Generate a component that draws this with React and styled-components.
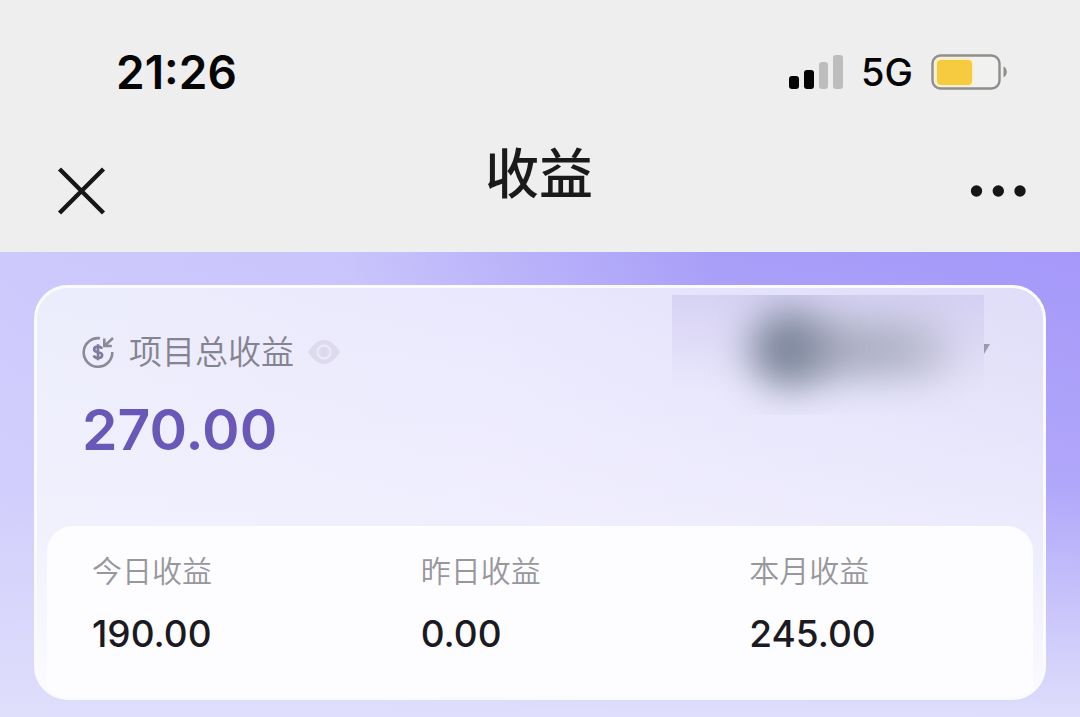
import { useState } from "react"
import styled, { createGlobalStyle } from "styled-components"

const GlobalStyle = createGlobalStyle`
* {
  box-sizing: border-box;
}
body {
  margin: 0;
  font-family: Inter, "Noto Sans CJK SC", sans-serif;
  color: #1b1a22;
}
`

const Page = styled.div`
min-height: 100vh;
display: flex;
flex-direction: column;
background-color: #eeeeee;
`
const StatusBar = styled.div`
display: flex;
align-items: center;
justify-content: space-between;
padding: 42px 72px 0 116px;
`
const Time = styled.time`
font-size: 46px;
font-weight: 600;
line-height: 60px;
color: #050505;
`
const StatusIcons = styled.div`
display: flex;
align-items: center;
gap: 18px;
`
const Network = styled.span`
font-size: 38px;
font-weight: 500;
line-height: 60px;
color: #050505;
`
const NavBar = styled.header`
display: flex;
align-items: center;
justify-content: space-between;
padding: 43px 52px 15px 56px;
`
const Title = styled.h1`
margin: 0;
padding-bottom: 32px;
font-size: 54px;
font-weight: 500;
line-height: 60px;
color: #1a1a1a;
`
const IconButton = styled.button`
display: flex;
align-items: center;
padding: 0;
border: none;
background: none;
color: ${(props) => props.color || "#161616"};
cursor: pointer;
`
const Content = styled.main`
flex: 1;
padding: 33px 34px 17px;
background:
  linear-gradient(to bottom, rgba(224, 224, 253, 0) 0%, rgba(224, 224, 253, 0.2) 50%, #dfdefb 100%),
  linear-gradient(to right, #cec9fc 0%, #c9c4fb 32%, #a89ef8 66%, #a598f9 100%);
`
const Card = styled.section`
border: 3px solid #fbfbff;
border-radius: 34px;
overflow: hidden;
background:
  linear-gradient(to bottom, rgba(244, 243, 255, 0) 0%, rgba(244, 243, 255, 0.6) 58%, #fbfbff 100%),
  linear-gradient(to right, #ecedfc 0%, #eae8fd 45%, #dfddf8 100%);
`
const Summary = styled.div`
display: flex;
align-items: flex-start;
justify-content: space-between;
min-height: 238px;
padding-left: 45px;
padding-right: 53px;
`
const Total = styled.div`
padding-top: 44px;
`
const TotalLabel = styled.div`
display: flex;
align-items: center;
gap: 14px;
font-size: 33px;
font-weight: 350;
line-height: 40px;
color: #85838f;
`
const Amount = styled.div`
margin-top: 22px;
font-size: 57px;
font-weight: 600;
line-height: 72px;
color: #6a58b9;
`
const AccountButton = styled.button`
display: flex;
align-items: flex-start;
padding: 0;
margin-top: 7px;
border: none;
background: none;
cursor: pointer;
`
const AccountMask = styled.span`
display: flex;
align-items: center;
width: 312px;
height: 120px;
padding: 0 32px 12px 78px;
overflow: hidden;
background: linear-gradient(to bottom, rgba(208, 202, 240, 0.7) 0%, rgba(220, 216, 246, 0) 80%);
`
const AvatarBlur = styled.span`
position: relative;
z-index: 1;
width: 76px;
height: 76px;
border-radius: 50%;
background-color: #7b8599;
filter: blur(19px);
`
const NameBlur = styled.span`
flex: 1;
height: 56px;
margin-left: -30px;
border-radius: 28px;
background: linear-gradient(to right, #a4a9bb, #adb0c4 60%, #c6c5db);
filter: blur(19px);
`
const Stats = styled.dl`
display: grid;
grid-template-columns: repeat(3, 1fr);
margin: 0 10px;
padding: 25px 0 39px;
border-radius: 26px 26px 0 0;
background-color: #fdfdff;
`
const Stat = styled.div`
padding-left: 45px;
`
const StatLabel = styled.dt`
font-size: 30px;
font-weight: 350;
line-height: 40px;
color: #98979d;
`
const StatValue = styled.dd`
margin: 19px 0 0;
font-size: 37px;
font-weight: 500;
line-height: 48px;
color: #1b1a22;
`

const SignalIcon = () => (
  <svg width="54" height="36" viewBox="0 0 54 36" aria-hidden="true">
    <rect x="0" y="22" width="10" height="13" rx="3" fill="#050505" />
    <rect x="15" y="16" width="10" height="19" rx="3" fill="#050505" />
    <rect x="30" y="8" width="9" height="27" rx="3" fill="#bdbdbd" />
    <rect x="44" y="1" width="10" height="34" rx="3" fill="#bdbdbd" />
  </svg>
)

const BatteryIcon = () => (
  <svg width="77" height="36" viewBox="0 0 77 36" aria-hidden="true">
    <rect x="1.5" y="1.5" width="67" height="33" rx="8" fill="#f1f1f0" stroke="#8e8e8c" strokeWidth="2.4" />
    <rect x="3.5" y="3.5" width="39" height="29" rx="6" fill="#f8efc6" />
    <rect x="6" y="6" width="35" height="25" rx="4" fill="#f7cb40" />
    <path d="M72.5 12.5c2 .9 3.3 2.9 3.3 5.4s-1.3 4.5-3.3 5.4z" fill="#8e8e8c" />
  </svg>
)

const CloseIcon = () => (
  <svg width="52" height="52" viewBox="0 0 52 52" fill="none" stroke="currentColor" strokeWidth="4.4">
    <path d="M3.5 4l44 44M47.5 4l-44 44" />
  </svg>
)

const MoreIcon = () => (
  <svg width="58" height="14" viewBox="0 0 58 14" fill="currentColor">
    <circle cx="6.5" cy="7" r="5.7" />
    <circle cx="28.3" cy="7" r="5.7" />
    <circle cx="50" cy="7" r="5.7" />
  </svg>
)

const IncomeIcon = () => (
  <svg width="33" height="34" viewBox="0 0 33 34" fill="none" stroke="#8c8a99" strokeWidth="2.6" aria-hidden="true">
    <path d="M18 3.3A14.3 14.3 0 1 0 30.3 17" />
    <path d="M31 3l-8 7.5M22.3 3.5v7.5h7.5" />
    <path
      d="M20 13.8c-.7-1.5-2.1-2.2-4-2.2-2.3 0-3.9 1-3.9 2.8 0 4 8.1 1.7 8.1 5.7 0 1.8-1.7 2.9-4.1 2.9-2.2 0-3.8-.9-4.4-2.500M16 9.300v16"
      stroke="#7f7b9c"
    />
  </svg>
)

const EyeIcon = ({ open }) => (
  <svg width="32" height="26" viewBox="0 0 32 26">
    <path d="M0 13C5 5 10 1 16 1s11 4 16 12c-5 8-10 12-16 12S5 21 0 13z" fill="currentColor" />
    {open && <circle cx="16" cy="13" r="6.5" fill="none" stroke="#eeecfa" strokeWidth="2" />}
  </svg>
)

// padded on top so the arrow sits level with the account name
const CaretIcon = () => (
  <svg width="6" height="60" viewBox="0 0 6 60" aria-hidden="true">
    <path d="M0 49h6L0 59z" fill="#9c99ae" />
  </svg>
)

const stats = [
  { label: "今日收益", value: "190.00" },
  { label: "昨日收益", value: "0.00" },
  { label: "本月收益", value: "245.00" },
]

const App = () => {
  const [visible, setVisible] = useState(true)

  return (
    <Page>
      <GlobalStyle />
      <StatusBar>
        <Time>21:26</Time>
        <StatusIcons>
          <SignalIcon />
          <Network>5G</Network>
          <BatteryIcon />
        </StatusIcons>
      </StatusBar>
      <NavBar>
        <IconButton aria-label="关闭">
          <CloseIcon />
        </IconButton>
        <Title>收益</Title>
        <IconButton aria-label="更多">
          <MoreIcon />
        </IconButton>
      </NavBar>
      <Content>
        <Card>
          <Summary>
            <Total>
              <TotalLabel>
                <IncomeIcon />
                <span>项目总收益</span>
                <IconButton color="#dcdaec" aria-label="显示金额" onClick={() => setVisible(!visible)}>
                  <EyeIcon open={visible} />
                </IconButton>
              </TotalLabel>
              <Amount>{visible ? "270.00" : "****"}</Amount>
            </Total>
            <AccountButton aria-label="切换账号">
              <AccountMask>
                <AvatarBlur />
                <NameBlur />
              </AccountMask>
              <CaretIcon />
            </AccountButton>
          </Summary>
          <Stats>
            {stats.map((item) => (
              <Stat key={item.label}>
                <StatLabel>{item.label}</StatLabel>
                <StatValue>{visible ? item.value : "****"}</StatValue>
              </Stat>
            ))}
          </Stats>
        </Card>
      </Content>
    </Page>
  )
}

export default App
